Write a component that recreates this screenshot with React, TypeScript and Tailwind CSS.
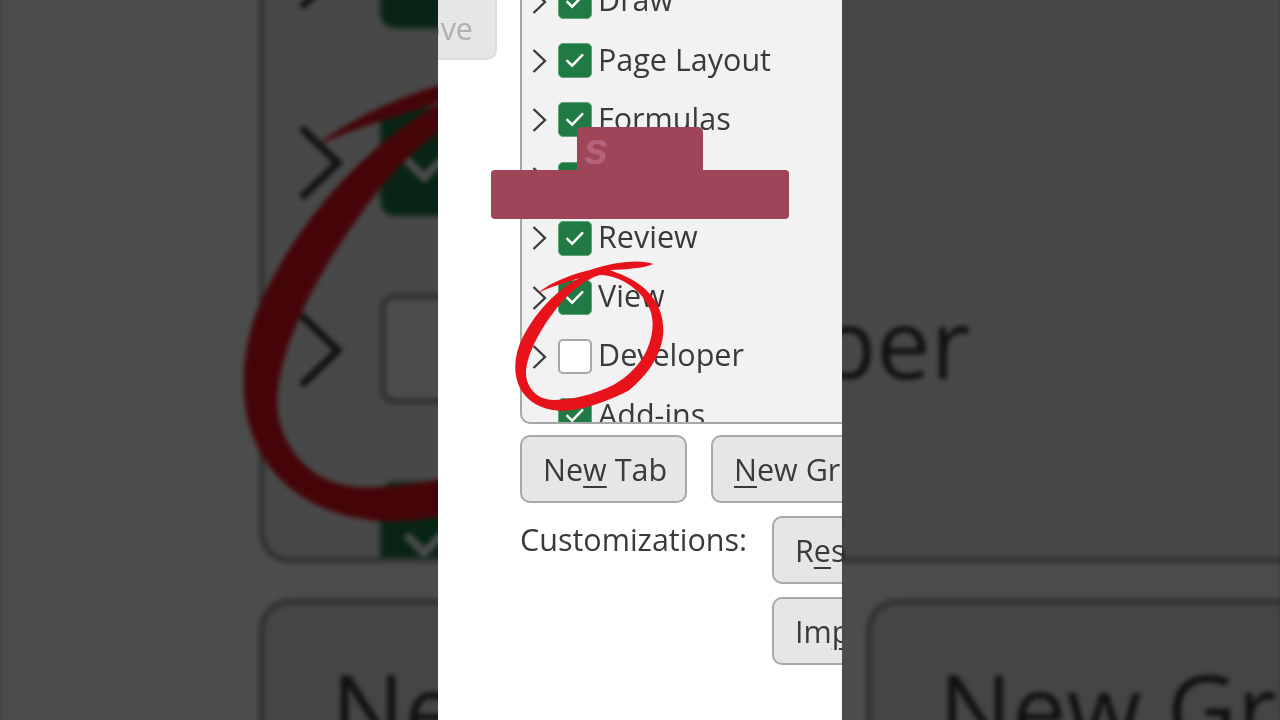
import React from 'react';

const tabs = ['Draw', 'Page Layout', 'Formulas', 'Data', 'Review', 'View', 'Developer', 'Add-ins'];

function Chevron({ hidden }: { hidden?: boolean }) {
  return (
    <svg width="16" height="26" viewBox="0 0 16 26" className="shrink-0" fill="none">
      {!hidden && <polyline points="1.5,2 13,13 1.5,24" stroke="#3a3a3a" strokeWidth="2.3" />}
    </svg>
  );
}

function TabRow({ label }: { label: string }) {
  const checked = label !== 'Developer';
  return (
    <div className="flex h-[59.2px] items-center pl-[10px]">
      {/* Add-ins has no children, so no expander */}
      <Chevron hidden={label === 'Add-ins'} />
      <div
        className={
          checked
            ? 'ml-[10px] flex h-[35px] w-[34px] shrink-0 items-center justify-center rounded-[5px] border border-[#5fa578] bg-[#1f7a43]'
            : 'ml-[10px] h-[35px] w-[34px] shrink-0 rounded-[5px] border-2 border-[#a8a8a8] bg-white'
        }
      >
        {checked && (
          <svg width="34" height="35" viewBox="0 0 34 35" fill="none">
            <polyline points="8,17 14,23 25.5,11" stroke="#ffffff" strokeWidth="2.6" />
          </svg>
        )}
      </div>
      <span className="ml-[6px] -mt-[4px] whitespace-nowrap text-[30.5px] font-[380] leading-none text-[#3a3a3a]">{label}</span>
    </div>
  );
}

function DialogButton({ children, width }: { children: React.ReactNode; width: string }) {
  return (
    <div className={`flex h-[68px] ${width} shrink-0 items-center overflow-hidden whitespace-nowrap rounded-[10px] border-2 border-[#a8a8a8] bg-[#e6e6e6] pl-[21px] pt-[2px] text-[30.5px] font-[380] text-[#3a3a3a]`}>
      {children}
    </div>
  );
}

function Key({ children }: { children: React.ReactNode }) {
  return <span className="underline decoration-[1.5px] underline-offset-[5px]">{children}</span>;
}

// the ribbon customize dialog, also used as the blown up backdrop
function Dialog() {
  return (
    <div className="h-[720px] w-[404px] overflow-hidden bg-white font-['Open_Sans',sans-serif]">
      <div className="flex items-start">
        <div className="flex h-[60px] w-[59px] shrink-0 items-center justify-end overflow-hidden rounded-br-[10px] border-r-2 border-b-2 border-[#dcdcdc] bg-[#e6e6e6] pr-[22px] text-[30.5px] font-[380] text-[#b0b0b0]">
          Remove
        </div>
        <div className="ml-[23px] h-[424px] w-[400px] shrink-0 overflow-hidden rounded-bl-[10px] border-b-2 border-l-2 border-[#a8a8a8] bg-[#f2f2f2]">
          <div className="-mt-[28px]">
            {tabs.map((t) => (
              <TabRow key={t} label={t} />
            ))}
          </div>
        </div>
      </div>
      <div className="ml-[82px] mt-[11px] flex gap-[24px]">
        <DialogButton width="w-[167px]">
          Ne<Key>w</Key>&nbsp;Tab
        </DialogButton>
        <DialogButton width="w-[220px]">
          <Key>N</Key>ew Group
        </DialogButton>
      </div>
      <div className="ml-[82px] mt-[13px] flex">
        <span className="w-[252px] shrink-0 text-[30.5px] font-[380] leading-[46px] text-[#3a3a3a]">Customizations:</span>
        <div className="flex flex-col gap-[13px]">
          <DialogButton width="w-[200px]">
            R<Key>e</Key>set
          </DialogButton>
          <DialogButton width="w-[200px]">
            Im<Key>p</Key>ort/Export
          </DialogButton>
        </div>
      </div>
    </div>
  );
}

// hand drawn circle around the Developer row
function RedCircle() {
  return (
    <svg width="342" height="200" viewBox="0 0 1026 600" className="absolute left-[62px] top-[240px]">
      <path
        fillRule="evenodd"
        fill="#e8121b"
        d="M460 72 C430 58 350 62 270 90 C215 103 155 125 112 160 C150 140 200 128 238 114 C170 150 100 220 60 310 C40 360 40 420 70 460 C100 500 150 515 200 512 C270 505 340 475 385 452 C440 410 490 340 490 270 C490 190 440 130 350 98 L330 90 C380 88 430 85 460 72 Z M300 105 C370 105 458 170 458 250 C458 320 420 390 340 435 C280 465 210 480 160 480 C110 480 78 440 78 400 C78 340 130 250 190 180 C220 150 260 115 300 105 Z"
      />
    </svg>
  );
}

function Scene() {
  return (
    <div className="relative h-[720px] w-[404px]">
      <Dialog />
      <RedCircle />
    </div>
  );
}

export default function App() {
  return (
    <div className="relative flex h-screen w-full justify-center overflow-hidden bg-[#4b4b4b]">
      {/* backdrop: same frame, zoomed and dimmed */}
      <div className="absolute inset-0 flex justify-center">
        <div className="scale-[3.18] blur-[0.8px]">
          <Scene />
        </div>
      </div>
      <div className="absolute inset-0 bg-black/70" />

      <div className="relative h-[720px] w-[404px] overflow-hidden">
        <div className="blur-[0.4px]">
          <Scene />
        </div>
        {/* caption banner over the video */}
        <div className="absolute left-[53px] top-[127px] flex w-[298px] flex-col items-center">
          <div className="h-[43px] w-[126px] rounded-t-[5px] bg-[#9e4558] pl-[7px] font-['Liberation_Sans',sans-serif] text-[44px] font-bold italic leading-[44px] text-[#b4637a]">
            s
          </div>
          <div className="h-[49px] w-full rounded-[4px] bg-[#9e4558]" />
        </div>
      </div>
    </div>
  );
}
